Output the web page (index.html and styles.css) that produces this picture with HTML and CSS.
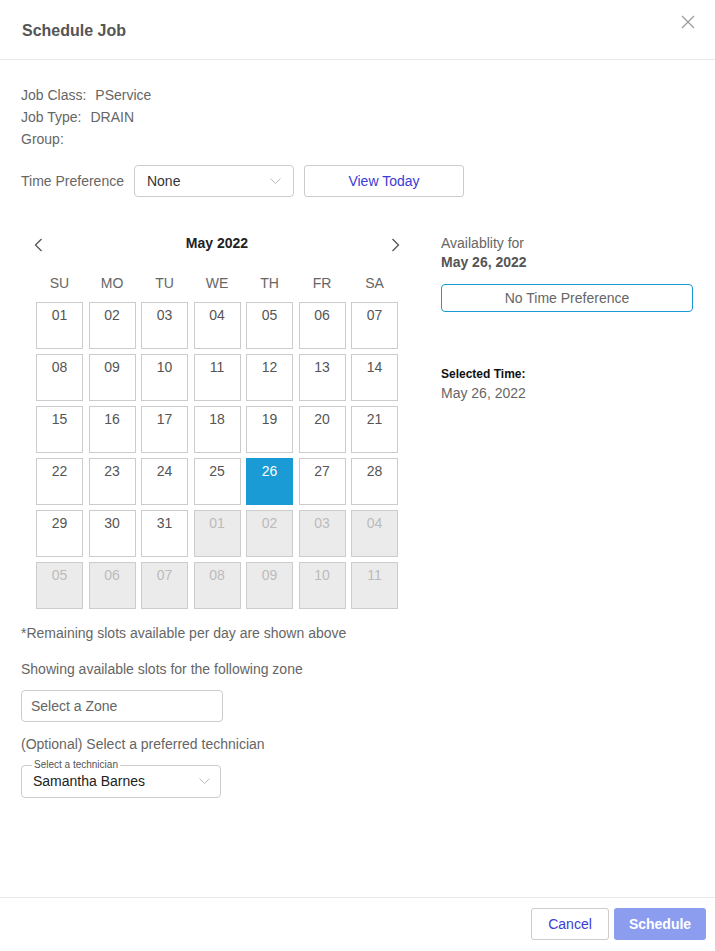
FILE: index.html
```html
<!DOCTYPE html>
<html lang="en">
<head>
  <meta charset="UTF-8">
  <meta name="viewport" content="width=device-width, initial-scale=1.0">
  <title>Schedule Job</title>
  <link rel="stylesheet" href="styles.css">
</head>
<body>

  <div class="modal">
    <header class="modal-header">
      <h2>Schedule Job</h2>
      <button class="close" aria-label="Close">
        <svg width="14" height="14" viewBox="0 0 14 14"><path d="M1 1L13 13M13 1L1 13" stroke="#999" stroke-width="1.2" fill="none"/></svg>
      </button>
    </header>

    <div class="modal-body">
      <div class="job-info">
        <div><span class="key">Job Class:</span>PService</div>
        <div><span class="key">Job Type:</span>DRAIN</div>
        <div><span class="key">Group:</span></div>
      </div>

      <div class="pref-row">
        <label>Time Preference</label>
        <div class="select">
          <span>None</span>
          <svg width="11" height="7" viewBox="0 0 11 7"><path d="M0.5 0.5L5.5 5.5L10.5 0.5" stroke="#bbb" fill="none"/></svg>
        </div>
        <button class="btn-outline">View Today</button>
      </div>

      <div class="schedule">
        <div class="calendar">
          <div class="cal-head">
            <svg width="9" height="14" viewBox="0 0 9 14"><path d="M7.5 1L1.5 7L7.5 13" stroke="#555" stroke-width="1.3" fill="none"/></svg>
            <span class="month">May 2022</span>
            <svg width="9" height="14" viewBox="0 0 9 14"><path d="M1.5 1L7.5 7L1.5 13" stroke="#555" stroke-width="1.3" fill="none"/></svg>
          </div>
          <div class="weekdays">
            <span>SU</span><span>MO</span><span>TU</span><span>WE</span><span>TH</span><span>FR</span><span>SA</span>
          </div>
          <div class="days" id="days"></div>
        </div>

        <div class="availability">
          <div>Availablity for</div>
          <div class="avail-date">May 26, 2022</div>
          <button class="slot">No Time Preference</button>
          <div class="selected-label">Selected Time:</div>
          <div>May 26, 2022</div>
        </div>
      </div>

      <p class="note">*Remaining slots available per day are shown above</p>
      <p class="zone-label">Showing available slots for the following zone</p>
      <input class="zone" type="text" placeholder="Select a Zone">

      <p class="tech-label">(Optional) Select a preferred technician</p>
      <fieldset class="tech">
        <legend>Select a technician</legend>
        <span>Samantha Barnes</span>
        <svg width="11" height="7" viewBox="0 0 11 7"><path d="M0.5 0.5L5.5 5.5L10.5 0.5" stroke="#bbb" fill="none"/></svg>
      </fieldset>
    </div>

    <footer class="modal-footer">
      <button class="btn-cancel">Cancel</button>
      <button class="btn-primary">Schedule</button>
    </footer>
  </div>

  <script>
    // Build the May 2022 grid (starts on Sunday, 31 days, padded to 6 weeks)
    const days = document.getElementById('days');
    for (let i = 1; i <= 42; i++) {
      const cell = document.createElement('div');
      const inMonth = i <= 31;
      const n = inMonth ? i : i - 31;
      cell.className = 'day' + (inMonth ? '' : ' off') + (i === 26 ? ' active' : '');
      cell.textContent = String(n).padStart(2, '0');
      days.appendChild(cell);
    }
  </script>

</body>
</html>
```

FILE: styles.css
```css
body { margin: 0; font-family: "Liberation Sans", Arial, sans-serif; font-size: 14px; color: #666; background: #fff; }
button { font-family: inherit; cursor: pointer; }
p { margin: 0; }

.modal { width: 715px; height: 951px; display: flex; flex-direction: column; }

.modal-header { height: 60px; flex-shrink: 0; border-bottom: 1px solid #e8e8e8; display: flex; align-items: center; justify-content: space-between; padding: 0 20px 0 22px; box-sizing: border-box; }
.modal-header h2 { margin: 3px 0 0; font-size: 16px; font-weight: bold; color: #555; }
.close { border: none; background: none; padding: 0; margin-top: -12px; }

.modal-body { flex: 1; padding: 24px 21px 0; }

.job-info div { line-height: 22px; }
.job-info .key { margin-right: 9px; }

.pref-row { display: flex; align-items: center; margin-top: 15px; }
.pref-row label { margin-right: 10px; }
.select { width: 160px; height: 32px; box-sizing: border-box; border: 1px solid #ccc; border-radius: 4px; display: flex; align-items: center; justify-content: space-between; padding: 0 12px; color: #333; }
.btn-outline { width: 160px; height: 32px; margin-left: 10px; background: #fff; border: 1px solid #ccc; border-radius: 3px; color: #3b3bd6; font-size: 14px; }

.schedule { display: flex; margin-top: 36px; padding-left: 15px; }
.calendar { width: 362px; }
.cal-head { display: flex; justify-content: space-between; align-items: center; height: 20px; margin: 0 -2px; }
.cal-head svg { margin-top: 4px; }
.month { font-weight: bold; color: #222; }
.weekdays { display: grid; grid-template-columns: repeat(7, 47px); column-gap: 5.5px; margin-top: 20px; line-height: 20px; text-align: center; }
.days { display: grid; grid-template-columns: repeat(7, 47px); grid-auto-rows: 47px; gap: 5px 5.5px; margin-top: 9px; }
.day { box-sizing: border-box; border: 1px solid #ccc; text-align: center; padding-top: 4px; line-height: 16px; color: #555; }
.day.off { background: #ebebeb; color: #bbb; }
.day.active { background: #1a9bd6; border-color: #1a9bd6; color: #fff; }

.availability { margin-left: 43px; width: 252px; padding-top: 1px; line-height: 19px; }
.avail-date { font-weight: bold; color: #555; }
.slot { display: block; width: 100%; height: 28px; margin-top: 12px; background: #fff; border: 1px solid #1a9bd6; border-radius: 4px; color: #666; font-size: 14px; }
.selected-label { margin-top: 53px; font-size: 12px; font-weight: bold; color: #111; }

.note { margin-top: 14px; line-height: 20px; }
.zone-label { margin-top: 16px; line-height: 20px; }
.zone { display: block; width: 202px; height: 32px; margin-top: 11px; box-sizing: border-box; border: 1px solid #ccc; border-radius: 4px; padding: 0 9px; font-family: inherit; font-size: 14px; }
.zone::placeholder { color: #666; }
.tech-label { margin-top: 12px; line-height: 20px; }
.tech { width: 200px; height: 38px; margin: 6px 0 0; box-sizing: border-box; border: 1px solid #ccc; border-radius: 4px; padding: 0 10px 0 11px; display: flex; align-items: center; justify-content: space-between; color: #222; }
.tech legend { font-size: 10px; color: #555; padding: 0 2px; margin-left: -1px; line-height: 10px; }
.tech span { margin-top: -5px; }
.tech svg { margin-top: -5px; }

.modal-footer { border-top: 1px solid #e8e8e8; display: flex; justify-content: flex-end; padding: 10px 9px 11px 0; }
.btn-cancel { width: 78px; height: 32px; background: #fff; border: 1px solid #ccc; border-radius: 3px; color: #3b3bd6; font-size: 14px; }
.btn-primary { width: 92px; height: 32px; margin-left: 5px; background: #8c9df0; border: none; border-radius: 3px; color: #fff; font-size: 14px; font-weight: bold; }
```
